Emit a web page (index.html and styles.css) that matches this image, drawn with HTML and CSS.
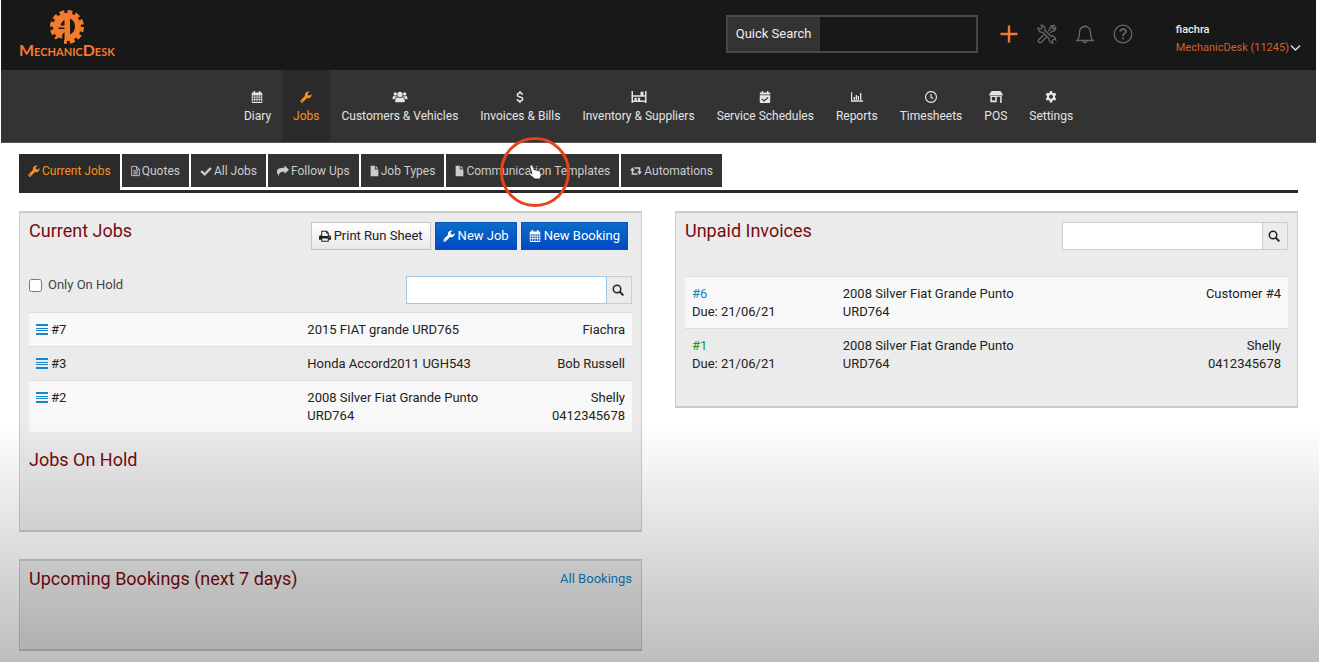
FILE: index.html
```html
<!DOCTYPE html>
<html lang="en">

<head>
    <meta charset="UTF-8">
    <meta name="viewport" content="width=device-width, initial-scale=1.0">
    <title>MechanicDesk - Jobs</title>
    <link rel="stylesheet" href="styles.css">
</head>

<body>
    <!-- shared icons -->
    <svg class="sprite" aria-hidden="true">
        <symbol id="i-calendar" viewBox="0 0 16 16">
            <path fill-rule="evenodd" d="M3.500 0h2v2h5V0h2v2H14a1 1 0 0 1 1 1v12a1 1 0 0 1-1 1H2a1 1 0 0 1-1-1V3a1 1 0 0 1 1-1h1.500zM2.200 5.500v2.300h2.300V5.500zm3.300 0v2.300h2V5.500zm3 0v2.300h2V5.500zm3 0v2.300h2.300V5.500zM2.200 8.800v2.200h2.300V8.800zm3.300 0v2.200h2V8.800zm3 0v2.200h2V8.800zm3 0v2.200h2.300V8.800zM2.200 12v2.800h2.300V12zm3.300 0v2.800h2V12zm3 0v2.800h2V12zm3 0v2.800h2.300V12z"/>
        </symbol>
        <symbol id="i-wrench" viewBox="0 0 16 16">
            <path fill-rule="evenodd" d="M15.700 4.300a5 5 0 0 1-6.400 5.100L3.900 14.900a2 2 0 0 1-2.800 0 2 2 0 0 1 0-2.800l5.500-5.400A5 5 0 0 1 13.300.9L10.300 2.700v2.400l2.100 1.200zM2.600 12.500a.8.8 0 1 0 .1 0z"/>
        </symbol>
        <symbol id="i-users" viewBox="0 0 20 16">
            <circle cx="10" cy="4.500" r="3.500"/>
            <circle cx="3.700" cy="4" r="2.300"/>
            <circle cx="16.300" cy="4" r="2.300"/>
            <path d="M4.500 15c-.8-.3-.8-1-.8-1.800 0-2.600 1-5 3.300-5 1.500 1.400 4.500 1.400 6 0 2.300 0 3.300 2.400 3.300 5 0 .8 0 1.500-.8 1.800zM0 10c0-1.800.5-3.500 1.700-3.500 1.200.8 2.500.8 3.600.3L6 7.600C4.400 8 3.500 9 3 11H1c-.6 0-1-.4-1-1zM20 10c0-1.800-.5-3.500-1.700-3.500-1.200.8-2.500.8-3.600.3l-.7.8c1.600.4 2.500 1.400 3 3.400h2c.6 0 1-.4 1-1z"/>
        </symbol>
        <symbol id="i-dollar" viewBox="0 0 16 16">
            <path fill="none" stroke="currentColor" stroke-width="2" d="M8 0v2.500M8 13.500V16M11.500 5C11 3.300 9.800 2.700 8 2.700c-2 0-3.400 1-3.400 2.600C4.600 9 11.600 7 11.600 10.800c0 1.600-1.500 2.600-3.600 2.600-2 0-3.400-.8-3.800-2.600"/>
        </symbol>
        <symbol id="i-shelves" viewBox="0 0 20 16">
            <path fill-rule="evenodd" d="M0 0h2v5.500h10V1h4v4.500h2V0h2v16h-2v-1.500H2V16H0zM2 7.500v5h2V9h3v3.500h1.500V9h3v3.500H18v-5z"/>
        </symbol>
        <symbol id="i-calcheck" viewBox="0 0 16 16">
            <path d="M3.500 0h2v2h5V0h2v2H14a1 1 0 0 1 1 1v1.500H1V3a1 1 0 0 1 1-1h1.500zM1 5.500h14V15a1 1 0 0 1-1 1H2a1 1 0 0 1-1-1zM4.300 10l-1 1 3.500 3.200 5.700-5-1-1.200-4.700 4.200z" fill-rule="evenodd"/>
        </symbol>
        <symbol id="i-chart" viewBox="0 0 18 16">
            <path d="M0 1h1.800v12H18v2H0zM4 8h2v4H4zM7 5h2v7H7zM10 6.500h2V12h-2zM13.500 2h2v10h-2z"/>
        </symbol>
        <symbol id="i-clock" viewBox="0 0 16 16">
            <path fill="none" stroke="currentColor" stroke-width="1.500" d="M8 .8a7.200 7.200 0 1 0 .01 0zM8 4v4.500l3 1.500"/>
        </symbol>
        <symbol id="i-shop" viewBox="0 0 18 16">
            <path fill-rule="evenodd" d="M3 0h12l3 4.500V6H0V4.500zM1.500 6.500H16.500V16h-2V7.500H10V15H1.500zM3.500 8v4.500H8V8z"/>
        </symbol>
        <symbol id="i-cog" viewBox="0 0 16 16">
            <path fill-rule="evenodd" d="M6.500 0h3l.5 2.300 1.300.8 2.300-.7 1.500 2.600-1.700 1.600v2l1.700 1.600-1.500 2.600-2.300-.7-1.300.8-.5 2.300h-3L6 12.900l-1.300-.8-2.300.7L.9 10.200l1.700-1.600v-2L.9 5l1.500-2.600 2.300.7L6 2.300zM8 5a2.600 2.600 0 1 0 .01 0z"/>
        </symbol>
        <symbol id="i-filetext" viewBox="0 0 14 16">
            <path fill="none" stroke="currentColor" stroke-width="1.400" d="M1 .8h7.500L13 5.200v10H1zM8.500.8v4.500H13M3.500 7.500h7M3.500 10h7M3.500 12.500h7"/>
        </symbol>
        <symbol id="i-file" viewBox="0 0 14 16">
            <path d="M1 0h6.500v5.500H13V16H1zM8.800 0L13 4.300H8.800z"/>
        </symbol>
        <symbol id="i-check" viewBox="0 0 16 16">
            <path fill="none" stroke="currentColor" stroke-width="3.200" d="M1.500 8l4.700 4.500L14.500 4"/>
        </symbol>
        <symbol id="i-share" viewBox="0 0 16 16">
            <path d="M10 .5l6 5.700-6 5.800V9C5 8.800 2.800 10 2.500 14.500 1 12.500 0 10.800 0 9c0-4.500 4-5.500 10-5.500z"/>
        </symbol>
        <symbol id="i-retweet" viewBox="0 0 18 14">
            <path d="M3.700 1.500L7.500 6.300H5v4h5.300l2 2.500H2.500V6.300H0zM14.300 12.500L10.500 7.700H13v-4H7.700l-2-2.500h9.800v6.500H18z"/>
        </symbol>
        <symbol id="i-print" viewBox="0 0 16 16">
            <path fill-rule="evenodd" d="M3 1h7.500L13 3.500V7c2 0 3 .8 3 2.500V13h-3v2.500H3V13H0V9.500C0 7.800 1 7 3 7zM4.300 2.300V8h7.400V4.500H9.500V2.300zM4.300 11.200v3h7.400v-3zM13.500 8.700a.7.700 0 1 0 .1 0z"/>
        </symbol>
        <symbol id="i-search" viewBox="0 0 16 16">
            <circle cx="6.700" cy="6.700" r="5" fill="none" stroke="currentColor" stroke-width="2"/>
            <path stroke="currentColor" stroke-width="2.600" stroke-linecap="round" d="M10.800 10.800l3.500 3.500"/>
        </symbol>
        <symbol id="i-bars" viewBox="0 0 12 11">
            <path d="M0 0h12v2H0zM0 4h12v1H0zM0 6h12v1H0zM0 9h12v2H0z"/>
        </symbol>
    </svg>

    <header class="topbar">
        <a class="logo" href="#">
            <svg class="logo-mark" viewBox="0 0 36 36" aria-hidden="true">
                <circle cx="18" cy="18" r="14" fill="currentColor"/>
                <circle cx="18" cy="18" r="15" fill="none" stroke="currentColor" stroke-width="4" stroke-dasharray="4.800 3.054"/>
                <path fill="#181818" d="M15.500 11v5.500h-4C12 14 13.500 12 15.500 11zM9.500 18.500h6V20h-6zM21 9.500c3.500 1.500 5 4.500 5 8s-1.500 6.500-5 8zM15.500 23v8h-2.300v-5.500zM4 32l6-3.500 5 2V36H8z"/>
            </svg>
            <span class="logo-text">MechanicDesk</span>
        </a>
        <div class="quick-search">
            <label for="quick">Quick Search</label>
            <input type="text" id="quick">
        </div>
        <div class="tools">
            <button class="tool add" aria-label="Add">
                <svg viewBox="0 0 20 20"><path d="M10 1.500v17M1.500 10h17"/></svg>
            </button>
            <button class="tool" aria-label="Tools">
                <svg viewBox="0 0 20 20">
                    <path d="M7.800 6.200L14 12.300c1.500-.6 3 0 4 1.300l.8 2.400-2.300-.8-1.500 1.500.8 2.300c-2 0-4.500-1.500-3.800-4.500L5.800 8.300C3.500 9 1 7 1.200 4.200l2.400.9 1.500-1.500L4.200 1.300c2.500-.3 4.500 2 3.600 4.900z"/>
                    <path d="M7 10.500l-5.200 5.200c-1.400 1.800.8 4 2.500 2.500l5.200-5.200M11 7l2-2c-.5-2 1.500-4 4-3.500l-2 2.300 1.300 1.300 2.300-2c.5 2.500-1.500 4.500-3.500 4l-2 2"/>
                </svg>
            </button>
            <button class="tool" aria-label="Notifications">
                <svg viewBox="0 0 20 20"><path d="M10 1v1.500M2 16.500h16c-2-1.800-2.500-3.500-2.500-7.500 0-4-2-6.500-5.500-6.500S4.500 5 4.500 9c0 4-.5 5.700-2.500 7.500zM8 16.800c.3 2.500 3.700 2.500 4 0"/></svg>
            </button>
            <button class="tool" aria-label="Help">
                <svg viewBox="0 0 20 20"><circle cx="10" cy="10" r="8.800"/><path stroke-width="1.800" d="M7.200 7.800c0-3.800 5.700-3.500 5.700-.3 0 2.200-2.900 2-2.900 4.500M10 13.500v2"/></svg>
            </button>
        </div>
        <button class="account">
            <span class="account-user">fiachra</span>
            <span class="account-company">MechanicDesk (11245)
                <svg viewBox="0 0 12 8" aria-hidden="true"><path d="M1 1.200l5 5 5-5"/></svg>
            </span>
        </button>
    </header>

    <nav class="mainnav">
        <a href="#"><svg class="icon"><use href="#i-calendar"/></svg>Diary</a>
        <a href="#" class="active"><svg class="icon"><use href="#i-wrench"/></svg>Jobs</a>
        <a href="#"><svg class="icon wide"><use href="#i-users"/></svg>Customers &amp; Vehicles</a>
        <a href="#"><svg class="icon"><use href="#i-dollar"/></svg>Invoices &amp; Bills</a>
        <a href="#"><svg class="icon wide"><use href="#i-shelves"/></svg>Inventory &amp; Suppliers</a>
        <a href="#"><svg class="icon"><use href="#i-calcheck"/></svg>Service Schedules</a>
        <a href="#"><svg class="icon"><use href="#i-chart"/></svg>Reports</a>
        <a href="#"><svg class="icon"><use href="#i-clock"/></svg>Timesheets</a>
        <a href="#"><svg class="icon wide"><use href="#i-shop"/></svg>POS</a>
        <a href="#"><svg class="icon"><use href="#i-cog"/></svg>Settings</a>
    </nav>

    <main class="content">
        <nav class="tabs">
            <a href="#" class="active"><svg class="icon"><use href="#i-wrench"/></svg>Current Jobs</a>
            <a href="#"><svg class="icon slim"><use href="#i-filetext"/></svg>Quotes</a>
            <a href="#"><svg class="icon"><use href="#i-check"/></svg>All Jobs</a>
            <a href="#"><svg class="icon"><use href="#i-share"/></svg>Follow Ups</a>
            <a href="#"><svg class="icon slim"><use href="#i-file"/></svg>Job Types</a>
            <a href="#"><svg class="icon slim"><use href="#i-file"/></svg>Communication Templates
                <span class="pointer">
                    <svg viewBox="0 0 14 16" aria-hidden="true"><path fill="#fff" stroke="#222" stroke-width=".8" d="M2.500 1.200c1-.6 1.800 0 2.200 1l1.600 3.900c.8-.7 1.700-.4 2 .3.800-.5 1.700-.2 2 .6.900-.4 1.700 0 2 .8l.8 3c.3 1.700-.6 3-1.600 4.200H6.800C5.500 13.500 3 11.800 1 10.200c-.7-1 .4-1.900 1.400-1.400l1.600.9L2 3c-.2-.8 0-1.500.5-1.800z"/></svg>
                </span>
            </a>
            <a href="#"><svg class="icon"><use href="#i-retweet"/></svg>Automations</a>
        </nav>

        <div class="columns">
            <div class="column">
                <section class="panel jobs">
                    <div class="panel-head">
                        <h2>Current Jobs</h2>
                        <div class="buttons">
                            <button class="btn"><svg class="icon"><use href="#i-print"/></svg>Print Run Sheet</button>
                            <button class="btn primary"><svg class="icon"><use href="#i-wrench"/></svg>New Job</button>
                            <button class="btn primary"><svg class="icon"><use href="#i-calendar"/></svg>New Booking</button>
                        </div>
                    </div>
                    <div class="filters">
                        <label class="hold"><input type="checkbox"> Only On Hold</label>
                        <div class="search focused">
                            <input type="text" aria-label="Search jobs">
                            <button aria-label="Search"><svg class="icon"><use href="#i-search"/></svg></button>
                        </div>
                    </div>
                    <table class="list jobs-list">
                        <tr>
                            <td><svg class="bars"><use href="#i-bars"/></svg>#7</td>
                            <td>2015 FIAT grande URD765</td>
                            <td>Fiachra</td>
                        </tr>
                        <tr>
                            <td><svg class="bars"><use href="#i-bars"/></svg>#3</td>
                            <td>Honda Accord2011 UGH543</td>
                            <td>Bob Russell</td>
                        </tr>
                        <tr>
                            <td><svg class="bars"><use href="#i-bars"/></svg>#2</td>
                            <td>2008 Silver Fiat Grande Punto<br>URD764</td>
                            <td>Shelly<br>0412345678</td>
                        </tr>
                    </table>
                    <h2>Jobs On Hold</h2>
                </section>

                <section class="panel bookings">
                    <div class="panel-head">
                        <h2>Upcoming Bookings (next 7 days)</h2>
                        <a href="#">All Bookings</a>
                    </div>
                </section>
            </div>

            <div class="column">
                <section class="panel invoices">
                    <div class="panel-head">
                        <h2>Unpaid Invoices</h2>
                        <div class="search">
                            <input type="text" aria-label="Search invoices">
                            <button aria-label="Search"><svg class="icon"><use href="#i-search"/></svg></button>
                        </div>
                    </div>
                    <table class="list invoices-list">
                        <tr>
                            <td><a href="#">#6</a><br>Due: 21/06/21</td>
                            <td>2008 Silver Fiat Grande Punto<br>URD764</td>
                            <td>Customer #4</td>
                        </tr>
                        <tr>
                            <td><a href="#" class="green">#1</a><br>Due: 21/06/21</td>
                            <td>2008 Silver Fiat Grande Punto<br>URD764</td>
                            <td>Shelly<br>0412345678</td>
                        </tr>
                    </table>
                </section>
            </div>
        </div>
    </main>
</body>

</html>
```
FILE: styles.css
```css
* {
    box-sizing: border-box;
}

body {
    margin: 0 3px 0 1px;
    min-height: 100vh;
    background: #fff;
    color: #222;
    font-family: Roboto, "Liberation Sans", sans-serif;
    font-size: 13px;
    line-height: 18px;
}

/* shade over the lower part of the page */
body::after {
    content: "";
    position: fixed;
    left: 0;
    right: 0;
    bottom: 0;
    height: 240px;
    background: linear-gradient(rgba(0, 0, 0, 0), rgba(0, 0, 0, 0.26));
    pointer-events: none;
}

a {
    color: #0f7fc0;
    text-decoration: none;
}

button,
input {
    font: inherit;
    color: inherit;
}

button {
    cursor: pointer;
}

h2 {
    margin: 0;
    color: #760c12;
    font-size: 18px;
    font-weight: 400;
    line-height: 18px;
}

.sprite {
    position: absolute;
    width: 0;
    height: 0;
}

.icon {
    width: 12px;
    height: 12px;
    flex: none;
    fill: currentColor;
}

/* top bar */
.topbar {
    display: flex;
    align-items: center;
    height: 70px;
    padding: 0 15px 2px 18px;
    background: #181818;
    color: #eee;
}

.logo {
    display: flex;
    flex-direction: column;
    align-items: center;
    margin-right: auto;
    padding-bottom: 4px;
    color: #f47b2c;
}

.logo-mark {
    width: 36px;
    height: 36px;
}

.logo-text {
    font-family: Lato, sans-serif;
    font-size: 16px;
    font-weight: 700;
    font-variant: small-caps;
    line-height: 10px;
}

.quick-search {
    display: flex;
    width: 252px;
    height: 38px;
    border: 2px solid #484848;
}

.quick-search label {
    padding: 0 8px;
    background: #333;
    line-height: 34px;
}

.quick-search input {
    flex: 1;
    min-width: 0;
    padding: 0 8px;
    border: 0;
    background: transparent;
}

.tools {
    display: flex;
    gap: 18px;
    margin: 0 43px 0 21px;
}

.tool {
    width: 20px;
    height: 20px;
    padding: 0;
    border: 0;
    background: none;
    color: #666;
}

.tool svg {
    display: block;
    width: 20px;
    height: 20px;
    fill: none;
    stroke: currentColor;
    stroke-width: 1.3;
}

.tool.add {
    color: #f07a35;
}

.tool.add svg {
    stroke-width: 2.4;
}

.account {
    display: flex;
    flex-direction: column;
    align-items: flex-start;
    padding: 10px 0 0;
    border: 0;
    background: none;
    font-size: 11px;
    line-height: 18px;
}

.account-user {
    font-weight: 500;
}

.account-company {
    display: flex;
    align-items: center;
    gap: 1px;
    color: #cc6428;
}

.account-company svg {
    width: 11px;
    height: 8px;
    fill: none;
    stroke: #ddd;
    stroke-width: 1.5;
}

/* main menu */
.mainnav {
    display: flex;
    justify-content: center;
    height: 73px;
    background: #333;
    border-bottom: 1px solid #555;
}

.mainnav a {
    display: flex;
    flex-direction: column;
    align-items: center;
    gap: 4px;
    padding: 21px 11px 0;
    color: #e4e4e4;
    font-size: 12px;
}

.mainnav .active {
    background: #2a2a2a;
    color: #f7931e;
}

.mainnav .wide {
    width: 16px;
}

/* tabs */
.content {
    padding: 11px 18px 10px;
}

.tabs {
    display: flex;
    align-items: flex-start;
    gap: 2px;
    height: 39px;
    border-bottom: 3px solid #2a2a2a;
}

.tabs a {
    position: relative;
    display: flex;
    align-items: center;
    gap: 2px;
    height: 33px;
    padding: 0 9px;
    background: #333;
    color: #ccc;
    font-size: 12px;
    white-space: nowrap;
}

.tabs .active {
    height: 36px;
    padding-bottom: 3px;
    background: #2a2a2a;
    color: #f7931e;
}

.tabs .slim {
    width: 9px;
}

.pointer {
    position: absolute;
    left: 54px;
    top: -17px;
    z-index: 1;
    display: flex;
    align-items: center;
    justify-content: center;
    width: 70px;
    height: 70px;
    border: 3px solid #e8421c;
    border-radius: 50%;
}

.pointer svg {
    width: 14px;
    height: 16px;
}

/* panels */
.columns {
    display: grid;
    grid-template-columns: 1fr 1fr;
    align-items: start;
    gap: 33px;
    margin-top: 18px;
}

.column {
    display: grid;
    gap: 27px;
}

.panel {
    padding: 9px;
    background: #ebebeb;
    border: 2px solid #ccc;
    border-width: 2px 1px;
}

.panel-head {
    display: flex;
    justify-content: space-between;
    align-items: flex-start;
}

.jobs {
    padding-bottom: 61px;
}

.jobs > h2 {
    margin-top: 19px;
}

.bookings {
    padding-bottom: 61px;
}

.invoices {
    padding-bottom: 26px;
}

.buttons {
    display: flex;
    gap: 4px;
    margin-right: 4px;
}

.btn {
    display: flex;
    align-items: center;
    gap: 3px;
    height: 28px;
    padding: 0 7px;
    border: 1px solid #c4c4c4;
    background: linear-gradient(#fff, #e8e8e8);
}

.primary {
    border-color: #0a50b8;
    background: linear-gradient(#0a6cc8, #0348c4);
    color: #fff;
}

.filters {
    display: flex;
    justify-content: space-between;
    margin-top: 26px;
}

.hold {
    display: flex;
    align-items: center;
    gap: 6px;
    height: 18px;
    color: #444;
}

.hold input {
    width: 13px;
    height: 13px;
    margin: 0;
}

.search {
    display: flex;
    width: 226px;
    height: 28px;
}

.search input {
    flex: 1;
    min-width: 0;
    padding: 0 6px;
    border: 1px solid #ccc;
    background: #fff;
}

.search.focused input {
    border-color: #a3c9e6;
}

.search button {
    display: flex;
    align-items: center;
    justify-content: center;
    width: 25px;
    padding: 0 3px 0 0;
    border: 1px solid #ccc;
    border-left: 0;
    background: #ebebeb;
}

.list {
    width: 100%;
    table-layout: fixed;
    border-collapse: collapse;
}

.list td {
    padding: 8px 7px 7px;
    border-top: 1px solid #ddd;
    vertical-align: top;
}

.list tr:nth-child(odd) {
    background: #f8f8f8;
}

.list td:last-child {
    text-align: right;
}

.jobs-list {
    margin-top: 8px;
}

.jobs-list td:first-child {
    width: 45%;
}

.jobs-list td:nth-child(2) {
    width: 33%;
}

.invoices-list {
    margin-top: 26px;
}

.invoices-list td:first-child {
    width: 25%;
}

.invoices-list td:nth-child(2) {
    width: 50%;
}

.bars {
    width: 12px;
    height: 11px;
    margin-right: 3px;
    vertical-align: -1px;
    fill: #1b84cc;
}

.green {
    color: #159a15;
}
```
